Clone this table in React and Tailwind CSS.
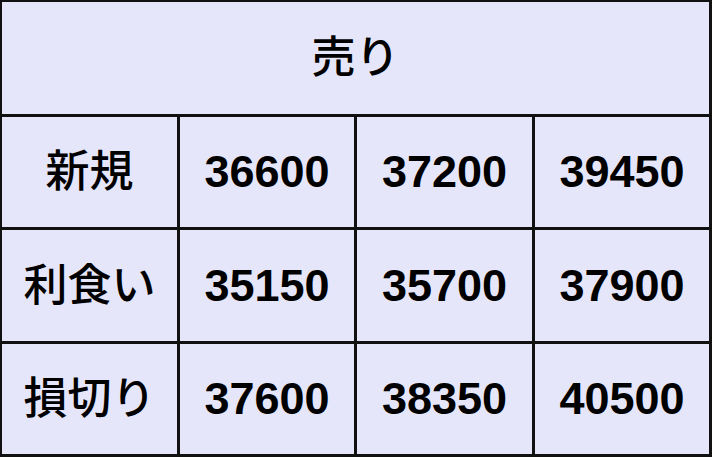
const rows = [
  { label: "新規", values: ["36600", "37200", "39450"] },
  { label: "利食い", values: ["35150", "35700", "37900"] },
  { label: "損切り", values: ["37600", "38350", "40500"] },
];

const cell = "bg-[#e6e6fa] flex items-center justify-center text-black";

const App = () => {
  return (
    <div
      className="w-[712px] h-[457px] bg-[#111111] grid grid-cols-[175px_174px_175px_174px] grid-rows-[112px_110px_111px_110px] gap-[3px] pt-[2px] pl-[2px] pr-[3px] pb-[3px]"
      style={{ fontFamily: '"Liberation Sans", "Noto Sans CJK JP", sans-serif' }}
    >
      <div className={`${cell} col-span-4 text-[44px] font-medium`}>売り</div>
      {rows.map((r) => (
        <React.Fragment key={r.label}>
          <div className={`${cell} text-[44px] font-medium`}>{r.label}</div>
          {r.values.map((v) => (
            <div key={v} className={`${cell} text-[45px] font-bold`}>{v}</div>
          ))}
        </React.Fragment>
      ))}
    </div>
  );
};

import React from "react";
export default App;
